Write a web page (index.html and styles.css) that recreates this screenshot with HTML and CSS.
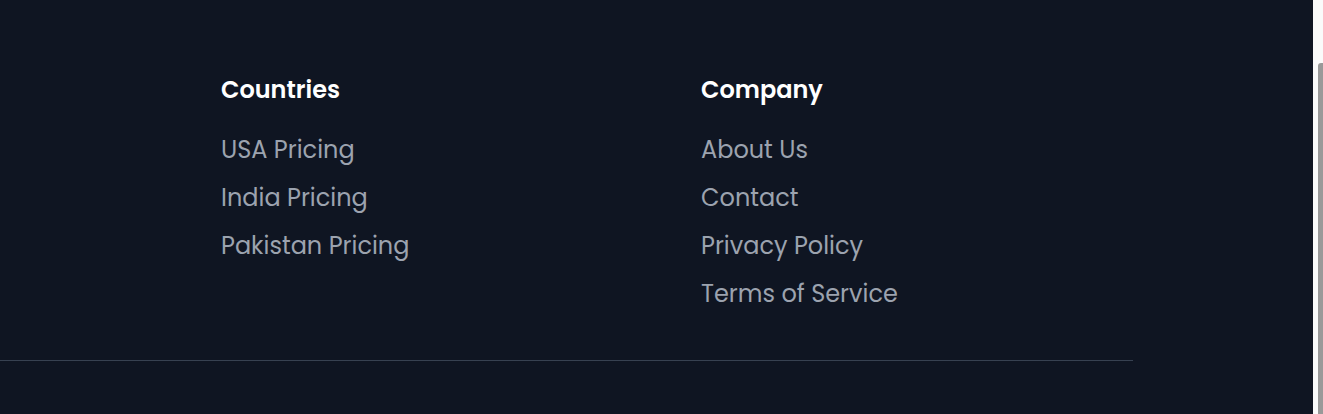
FILE: index.html
```html
<!DOCTYPE html>
<html lang="en">
<head>
<meta charset="utf-8">
<title>Footer</title>
<link rel="stylesheet" href="styles.css">
</head>
<body>
<div class="page">
  <footer class="footer">
    <div class="columns">
      <div class="col">
        <h3 class="col-title">Countries</h3>
        <ul class="links">
          <li><a href="#">USA Pricing</a></li>
          <li><a href="#">India Pricing</a></li>
          <li><a href="#">Pakistan Pricing</a></li>
        </ul>
      </div>
      <div class="col">
        <h3 class="col-title">Company</h3>
        <ul class="links">
          <li><a href="#">About Us</a></li>
          <li><a href="#">Contact</a></li>
          <li><a href="#">Privacy Policy</a></li>
          <li><a href="#">Terms of Service</a></li>
        </ul>
      </div>
    </div>
    <div class="divider"></div>
  </footer>
  <div class="scrollbar"><div class="thumb"></div></div>
</div>
</body>
</html>
```

FILE: styles.css
```css
* { box-sizing: border-box; }
html, body { margin: 0; padding: 0; height: 100%; overflow: hidden; }
body {
  background: #0f1522;
  font-family: "Poppins", "Inter", "Open Sans", sans-serif;
}
.page {
  display: flex;
  height: 414px;
}
.footer {
  flex: 1;
  background: #0f1522;
  padding-top: 74px;
}
.columns {
  display: flex;
  padding-left: 221px;
}
.col { width: 480px; }
.col-title {
  margin: 0 0 28px 0;
  color: #ffffff;
  font-size: 24px;
  line-height: 32px;
  font-weight: 600;
}
.links {
  list-style: none;
  margin: 0;
  padding: 0;
  display: flex;
  flex-direction: column;
  gap: 16px;
}
.links li {
  font-size: 24px;
  line-height: 32px;
}
.links a {
  display: block;
  color: #9ca3af;
  text-decoration: none;
}
.divider {
  margin-top: 50px;
  width: 1133px;
  height: 1px;
  background: #374151;
}
.scrollbar {
  width: 10px;
  background: #fafafa;
  display: flex;
  flex-direction: column;
  padding-top: 63px;
  padding-left: 5px;
}
.thumb {
  flex: 1;
  background: #999999;
  border-top-left-radius: 3px;
}
```
